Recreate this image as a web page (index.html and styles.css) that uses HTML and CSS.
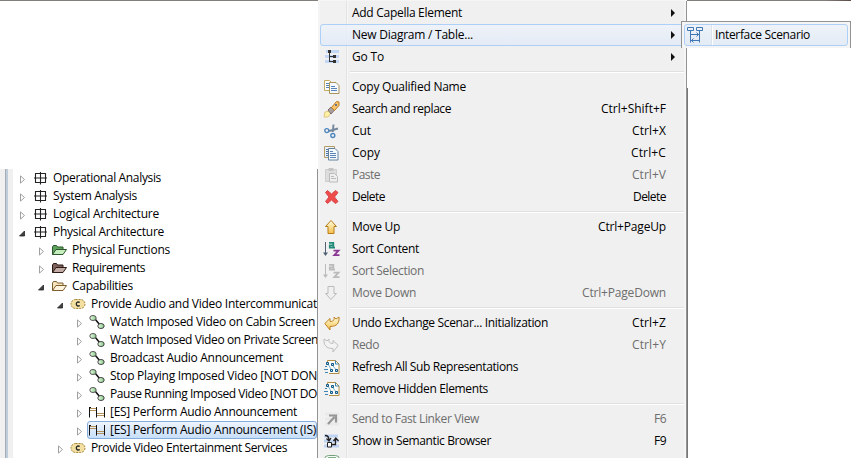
FILE: index.html
```html
<!DOCTYPE html>
<html lang="en">
<head>
<meta charset="utf-8">
<title>Project Explorer</title>
<link rel="stylesheet" href="styles.css">
</head>
<body>
<svg class="defs" aria-hidden="true">
  <defs>
    <linearGradient id="gold" x1="0" y1="0" x2="0" y2="1"><stop offset="0" stop-color="#fffbe0"/><stop offset="1" stop-color="#f5c14a"/></linearGradient>
    <linearGradient id="leaf" x1="0" y1="0" x2="1" y2="0"><stop offset="0" stop-color="#f4fff0"/><stop offset="1" stop-color="#7fc77f"/></linearGradient>
    <symbol id="closed" viewBox="0 0 7 9"><path d="M1.500 .9v7.200L5.500 4.500z" fill="#fff" stroke="#a0a0a0"/></symbol>
    <symbol id="open" viewBox="0 0 7 9"><path d="M5.500 2v5H.5z" fill="#404040" stroke="#262626" stroke-width=".8"/></symbol>
    <symbol id="arch" viewBox="0 0 16 16"><path d="M2.500 3.500h10v9h-10zM7.500 2v12.500M1 8h13" fill="none" stroke="#222" stroke-width="1.100"/></symbol>
    <symbol id="folder" viewBox="0 0 16 16"><path d="M1.500 12.500V5l1-1.500h3l1 1.500h5.500V7" class="back"/><path d="M1.500 12.500 5 7.500h10.500L12 12.500z" class="front"/></symbol>
    <symbol id="cap" viewBox="0 0 16 16"><rect x="1" y="3.500" width="14" height="9" rx="4.500" fill="#f3dfa2" stroke="#a08538" stroke-dasharray="2 1"/><path d="M9.700 6.500C8.300 5.500 6.300 6 6.300 8s2 2.500 3.400 1.500" fill="none" stroke="#222" stroke-width="1.300"/></symbol>
    <symbol id="chain" viewBox="0 0 16 16"><path d="m6 5 5 6" stroke="#111" stroke-width="1.500"/><ellipse cx="4" cy="4" rx="3.200" ry="2.500" fill="url(#leaf)" stroke="#555"/><ellipse cx="12" cy="12" rx="3.200" ry="2.500" fill="url(#leaf)" stroke="#444"/></symbol>
    <symbol id="es" viewBox="0 0 16 16"><path d="M.5 3v10.500M7.500 3v10.500M15.500 3v10.500" stroke="#111"/><path d="M0 3.500h2M7 3.500h1" stroke="#111"/><path d="M1 4.500h6M1 6.500h6M8 9.500h7M8 11.500h7" stroke="#b4925a"/></symbol>
    <symbol id="goto" viewBox="0 0 16 16"><path d="M2 2.500h13M1 7.500h14M1 12.500h14" stroke="#c2d6f5" stroke-width="3"/><path d="M5.500 2v11M5.500 7.500H10M5.500 12.500H10" stroke="#333" fill="none"/><path d="M4 1h3v3H4zM9 6h3v3H9zM9 11h3v3H9z" fill="#333"/></symbol>
    <symbol id="qname" viewBox="0 0 16 16"><path d="M.5 1.500h5l2 2v8h-7z" fill="#fff" stroke="#c2aa60"/><path d="M2 4.500h4M2 6.500h4M2 8.500h4" stroke="#5784b8"/><path d="M5.500 3.500H12l3 3v8H5.500z" fill="#f5f9ff" stroke="#a89457"/><path d="M7 7.500h4M7 9.500h6M7 11.500h6" stroke="#5784b8" stroke-width="1.200"/></symbol>
    <symbol id="torch" viewBox="0 0 16 16"><path d="m1 11 4-1 2 2-3 4H0z" fill="#fff2a5" stroke="#e0c67d"/><path d="m4 9 3-3 3.500 3-3.500 4z" fill="#a9a19e" stroke="#796f73"/><path d="m7.500 6.500 5-6 2.500.5v3.500L10.500 9.500z" fill="#f9c469" stroke="#bd7b24"/><circle cx="12" cy="4" r="1" fill="#365d94"/></symbol>
    <symbol id="cut" viewBox="0 0 16 16"><path d="M9.500 1.500 8.800 9M14 5.500 5 8" stroke="#73879b" stroke-width="1.900"/><circle cx="2.800" cy="7.600" r="2" fill="none" stroke="#4c86bd" stroke-width="1.400"/><circle cx="8.800" cy="12.500" r="2" fill="none" stroke="#4c86bd" stroke-width="1.400"/></symbol>
    <symbol id="copy" viewBox="0 0 16 16"><path d="M.5 1.500h10v11H.5z" fill="#eaf2ff" stroke="#b49b62"/><path d="M2 4.500h2M2 6.500h2M2 8.500h2M2 10.500h2" stroke="#4e78a9"/><path d="M4.500 3.500h6.500l3 3v8.500H4.500z" fill="#f4f9ff" stroke="#66829b"/><path d="M6 6.500h3M6 8.500h6M6 10.500h6M6 12.500h6" stroke="#5885b6"/></symbol>
    <symbol id="paste" viewBox="0 0 16 16"><path d="M1.500 2.500h11v12h-11z" fill="#ddd" stroke="#cecece"/><path d="M4.500 1h5v3h-5z" fill="#c4c4c4"/><path d="M5.500 6.500h5l3 3V15h-8z" fill="#eee" stroke="#bbb"/><path d="M7 9.500h3M7 11.500h5" stroke="#bbb"/></symbol>
    <symbol id="delete" viewBox="0 0 16 16"><path d="m1.500 3.500 2-2L7.500 5l4-3.500 2.500 2L10.500 8l3.500 4.500-2.500 2-4-3.500-4 3.500-2-2L5 8z" fill="#ed4c4a" stroke="#d8464a"/></symbol>
    <symbol id="up" viewBox="0 0 16 16"><path d="m7 1.500 5.500 6H10v7H4v-7H1.500z" fill="url(#gold)" stroke="#b87b17"/></symbol>
    <symbol id="down" viewBox="0 0 16 16"><path d="m7 14.500-5.500-6H4v-7h6v7h2.500z" fill="#f0f0f0" stroke="#bbb"/></symbol>
    <symbol id="sort" viewBox="0 0 16 16"><path d="M1.500 1v13" stroke="currentColor"/><path d="M-1 11.500h5l-2.500 3.500z" fill="currentColor"/><path d="M5 1.800h4.300v5.700M9.500 4.300H5.800v2.400h5.200" class="letter-a"/><path d="M9.500 9.700h5l-4.200 4.500h5.200" class="letter-z"/></symbol>
    <symbol id="undo" viewBox="0 0 16 16"><path d="M.8 8.500 6 3.500v3c4 0 4.500-2 4-4.500l2 2 3-2c.5 6-2 9.500-9 9.500V15z" stroke-linejoin="round"/></symbol>
    <symbol id="refresh" viewBox="0 0 16 16"><path d="M3.500 4V1.500h8l3.500 3.500v9.500H5" fill="#fbfbf8" stroke="#b48d45"/><path d="M11.500 1.500V5H15M1 7.500h2M0 10.500h4M1 13.500h3" fill="none" stroke="#3e86b3"/><path d="m4 5 4 7M8 5.500l4.500 6" stroke="#5b9dc4" stroke-width=".8"/><g fill="#b9dff0" stroke="#125887"><path d="M2.500 3.500h2v2h-2zM7.500 4.500h2v2h-2zM6.500 10.500h2v2h-2zM11.500 10.500h2v2h-2z"/></g></symbol>
    <symbol id="send" viewBox="0 0 16 16"><path d="M1 3h14M1 8h14M1 13h14" stroke="#e9e9e9" stroke-width="3"/><path d="m4 13 6.500-7M5 4.500h7v7" fill="none" stroke="#969696" stroke-width="2.200"/></symbol>
    <symbol id="semantic" viewBox="0 0 16 16"><path d="M0 3h14M0 8h15M0 13h15" stroke="#bfd3f3" stroke-width="3"/><path d="M1 2.500c3 0 4 1.500 4 5M2.500 5.500 5 8l2-3M8 11.500h3.500V6M9.500 8l2.300-3 2.700 3" fill="none" stroke="#222" stroke-width="1.300"/><path d="M3.500 9.500h4V14h-4z" fill="#fff" stroke="#222"/></symbol>
    <symbol id="info" viewBox="0 0 16 16"><rect x=".5" y=".5" width="15" height="15" rx="4" fill="#f4faf4" stroke="#76a17d"/><path d="M4 2.500h8" stroke="#86ad8c"/></symbol>
    <symbol id="scenario" viewBox="0 0 16 16"><g fill="none" stroke="#3f78b5"><path d="M.5 .5h6v3h-6zM9.500 .5h6v3h-6zM3.500 3.500v12M12.500 3.500v12M4 7.500h8M9.500 5.500l2 2-2 2M4 13.500h8M6.500 11.500l-2 2 2 2"/></g></symbol>
  </defs>
</svg>
<div class="screen">
  <div class="topline"></div>
  <aside class="explorer">
    <div class="gutter"></div>
    <div class="tree">
      <div class="node"><svg class="tw"><use href="#closed"/></svg><span class="label"><svg class="ic"><use href="#arch"/></svg><span data-width="108">Operational Analysis</span></span></div>
      <div class="node"><svg class="tw"><use href="#closed"/></svg><span class="label"><svg class="ic"><use href="#arch"/></svg><span data-width="84">System Analysis</span></span></div>
      <div class="node"><svg class="tw"><use href="#closed"/></svg><span class="label"><svg class="ic"><use href="#arch"/></svg><span data-width="106">Logical Architecture</span></span></div>
      <div class="node"><svg class="tw"><use href="#open"/></svg><span class="label"><svg class="ic"><use href="#arch"/></svg><span data-width="111">Physical Architecture</span></span></div>
      <div class="node l1"><svg class="tw"><use href="#closed"/></svg><span class="label"><svg class="ic green"><use href="#folder"/></svg><span data-width="98">Physical Functions</span></span></div>
      <div class="node l1"><svg class="tw"><use href="#closed"/></svg><span class="label"><svg class="ic brown"><use href="#folder"/></svg><span data-width="73">Requirements</span></span></div>
      <div class="node l1"><svg class="tw"><use href="#open"/></svg><span class="label"><svg class="ic cream"><use href="#folder"/></svg><span data-width="61">Capabilities</span></span></div>
      <div class="node l2"><svg class="tw"><use href="#open"/></svg><span class="label"><svg class="ic"><use href="#cap"/></svg><span data-width="226">Provide Audio and Video Intercommunicat</span></span></div>
      <div class="node l3"><svg class="tw"><use href="#closed"/></svg><span class="label"><svg class="ic"><use href="#chain"/></svg><span data-width="205">Watch Imposed Video on Cabin Screen</span></span></div>
      <div class="node l3"><svg class="tw"><use href="#closed"/></svg><span class="label"><svg class="ic"><use href="#chain"/></svg><span data-width="208">Watch Imposed Video on Private Screen</span></span></div>
      <div class="node l3"><svg class="tw"><use href="#closed"/></svg><span class="label"><svg class="ic"><use href="#chain"/></svg><span data-width="173">Broadcast Audio Announcement</span></span></div>
      <div class="node l3"><svg class="tw"><use href="#closed"/></svg><span class="label"><svg class="ic"><use href="#chain"/></svg><span data-width="207">Stop Playing Imposed Video [NOT DON</span></span></div>
      <div class="node l3"><svg class="tw"><use href="#closed"/></svg><span class="label"><svg class="ic"><use href="#chain"/></svg><span data-width="207">Pause Running Imposed Video [NOT DO</span></span></div>
      <div class="node l3"><svg class="tw"><use href="#closed"/></svg><span class="label"><svg class="ic"><use href="#es"/></svg><span data-width="187">[ES] Perform Audio Announcement</span></span></div>
      <div class="node l3"><svg class="tw"><use href="#closed"/></svg><span class="label selected"><svg class="ic"><use href="#es"/></svg><span data-width="206">[ES] Perform Audio Announcement (IS)</span></span></div>
      <div class="node l2"><svg class="tw"><use href="#closed"/></svg><span class="label"><svg class="ic"><use href="#cap"/></svg><span data-width="196">Provide Video Entertainment Services</span></span></div>
    </div>
  </aside>
  <nav class="menu">
    <div class="item"><i></i><span data-width="110">Add Capella Element</span><b class="arrow"></b></div>
    <div class="item hot"><i></i><span data-width="121">New Diagram / Table...</span><b class="arrow"></b></div>
    <div class="item"><i><svg class="ic"><use href="#goto"/></svg></i><span data-width="32">Go To</span><b class="arrow"></b></div>
    <hr>
    <div class="item"><i><svg class="ic"><use href="#qname"/></svg></i><span data-width="114">Copy Qualified Name</span></div>
    <div class="item"><i><svg class="ic"><use href="#torch"/></svg></i><span data-width="99">Search and replace</span><kbd data-width="65">Ctrl+Shift+F</kbd></div>
    <div class="item"><i><svg class="ic"><use href="#cut"/></svg></i><span data-width="19">Cut</span><kbd data-width="34">Ctrl+X</kbd></div>
    <div class="item"><i><svg class="ic"><use href="#copy"/></svg></i><span data-width="28">Copy</span><kbd data-width="35">Ctrl+C</kbd></div>
    <div class="item off"><i><svg class="ic"><use href="#paste"/></svg></i><span data-width="28">Paste</span><kbd data-width="34">Ctrl+V</kbd></div>
    <div class="item"><i><svg class="ic"><use href="#delete"/></svg></i><span data-width="33">Delete</span><kbd data-width="33">Delete</kbd></div>
    <hr>
    <div class="item"><i><svg class="ic"><use href="#up"/></svg></i><span data-width="48">Move Up</span><kbd data-width="68">Ctrl+PageUp</kbd></div>
    <div class="item"><i><svg class="ic sort"><use href="#sort"/></svg></i><span data-width="67">Sort Content</span></div>
    <div class="item off"><i><svg class="ic sort"><use href="#sort"/></svg></i><span data-width="72">Sort Selection</span></div>
    <div class="item off"><i><svg class="ic"><use href="#down"/></svg></i><span data-width="64">Move Down</span><kbd data-width="84">Ctrl+PageDown</kbd></div>
    <hr>
    <div class="item"><i><svg class="ic undo"><use href="#undo"/></svg></i><span data-width="196">Undo Exchange Scenar... Initialization</span><kbd data-width="34">Ctrl+Z</kbd></div>
    <div class="item off"><i><svg class="ic redo"><use href="#undo"/></svg></i><span data-width="27">Redo</span><kbd data-width="34">Ctrl+Y</kbd></div>
    <div class="item"><i><svg class="ic"><use href="#refresh"/></svg></i><span data-width="166">Refresh All Sub Representations</span></div>
    <div class="item"><i><svg class="ic"><use href="#refresh"/></svg></i><span data-width="136">Remove Hidden Elements</span></div>
    <hr>
    <div class="item off"><i><svg class="ic"><use href="#send"/></svg></i><span data-width="127">Send to Fast Linker View</span><kbd data-width="12">F6</kbd></div>
    <div class="item"><i><svg class="ic"><use href="#semantic"/></svg></i><span data-width="139">Show in Semantic Browser</span><kbd data-width="12">F9</kbd></div>
    <div class="item"><i><svg class="ic"><use href="#info"/></svg></i></div>
  </nav>
  <div class="edge"></div>
  <nav class="submenu"><div class="subitem"><svg class="ic"><use href="#scenario"/></svg><span data-width="95">Interface Scenario</span></div></nav>
</div>
<script src="fit.js"></script>
</body>
</html>
```
FILE: styles.css
```css
* { box-sizing: border-box; }
body { margin: 0; background: #fff; color: #000; font: 12px/18px "Open Sans", "Noto Sans", sans-serif; overflow: hidden; }
.defs { position: absolute; width: 0; height: 0; }
.screen { position: relative; display: flex; width: 852px; height: 458px; overflow: hidden; }
.topline { position: absolute; top: 0; left: 0; width: 851px; height: 1px; background: linear-gradient(90deg, #837f7c 318px, #f5f5f5 318px 687px, #837f7c 687px 825px, #5b4a45); }
.explorer { display: flex; width: 318px; height: 289px; margin-top: 169px; border-right: 1px solid #929292; overflow: hidden; }
.gutter { flex: none; width: 13px; background: linear-gradient(90deg, #f0f0f0 5px, #a5acb5 5px 6px, #bfcddb 6px 8px, #f0f0f0 8px); }
.tree { flex: 1; min-width: 0; overflow: hidden; }
.node { display: flex; align-items: center; height: 18px; padding-left: 5px; }
.l1 { padding-left: 24px; }
.l2 { padding-left: 43px; }
.l3 { padding-left: 62px; }
.tw { flex: none; width: 7px; height: 9px; margin: 2px 6px 0 1px; }
.label { display: flex; align-items: center; height: 18px; padding-left: 1px; white-space: nowrap; }
.label .ic { margin-right: 4px; }
.l1 .label, .l2 .label, .l3 .label { padding-left: 0; }
.l1 .label .ic, .l2 .label .ic { margin-right: 5px; }
.l3 .label .ic { margin-right: 5px; }
.label.selected { width: 236px; margin-left: -2px; padding-left: 1px; border: 1px solid #84acdd; border-radius: 3px; background: linear-gradient(#edf4fd, #c8dffa); }
.ic { display: block; flex: none; width: 16px; height: 16px; overflow: visible; }
[data-width] { flex: none; white-space: nowrap; }
.green { --back: #5ea45e; --front: #c5edbd; --line: #2c562c; }
.brown { --back: #7d625b; --front: #c2aba4; --line: #2c1a15; }
.cream { --back: #f6e4be; --front: #fff5df; --line: #7d5f2e; }
.back { fill: var(--back); stroke: var(--line); }
.front { fill: var(--front); stroke: var(--line); }
.menu { flex: none; width: 369px; height: 458px; padding: 2px 2px 0; border-right: 1px solid #929292; background: linear-gradient(90deg, #f5f5f5 2px, #f1f1f1 2px 28px, #e2e3e3 28px 29px, #f7f7f7 29px 30px, #f0f0f0 30px 366px, #f5f5f5 366px); overflow: hidden; }
.item { display: flex; align-items: center; height: 22px; padding-right: 18px; }
.item i { display: flex; flex: none; width: 32px; padding-left: 4px; }
.item kbd { margin-left: auto; font: inherit; }
.item.hot { border: 1px solid #aecff7; border-radius: 3px; background: linear-gradient(rgba(238,243,251,.8), rgba(225,234,246,.8)); padding-right: 17px; }
.item.hot i { width: 31px; }
.off { color: #6d6d6d; }
.arrow { width: 0; height: 0; margin-left: auto; margin-right: -9px; border: 4px solid transparent; border-left-color: #111; border-right: 0; }
.menu hr { height: 2px; margin: 3px 0 3px 30px; border: 0; border-top: 1px solid #e0e0e0; background: #fff; }
symbol { overflow: visible; }
.sort { color: #4f6172; --a: #218979; --z: #8b3895; }
.off .sort { color: #bbb; --a: #bbb; --z: #bbb; }
.letter-a { fill: none; stroke: var(--a); stroke-width: 1.8; }
.letter-z { fill: none; stroke: var(--z); stroke-width: 1.8; }
.undo { fill: url(#gold); stroke: #bd831f; }
.redo { fill: #f3f3f3; stroke: #bdbdbd; transform: translateX(-1px) scaleX(-1); }
.edge { width: 1px; height: 370px; margin-top: 88px; background: #777; }
.submenu { position: absolute; left: 681px; top: 21px; width: 170px; height: 27px; padding: 2px 2px 0; border: 1px solid #929292; border-bottom: 0; background: #f5f5f5; }
.subitem { display: flex; align-items: center; height: 22px; padding-left: 2px; border: 1px solid #aecff7; border-radius: 3px; background: linear-gradient(90deg, transparent 26px, #dce3eb 26px 27px, #fff 27px 28px, transparent 28px), linear-gradient(#eff3f9, #e3ebf5); }
.subitem .ic { margin-right: 12px; }
```
FILE: fit.js
```js
for (const el of document.querySelectorAll('[data-width]')) {
  const natural = el.getBoundingClientRect().width;
  const target = Number(el.dataset.width);
  el.style.letterSpacing = (target - natural) / el.textContent.length + 'px';
}
```
